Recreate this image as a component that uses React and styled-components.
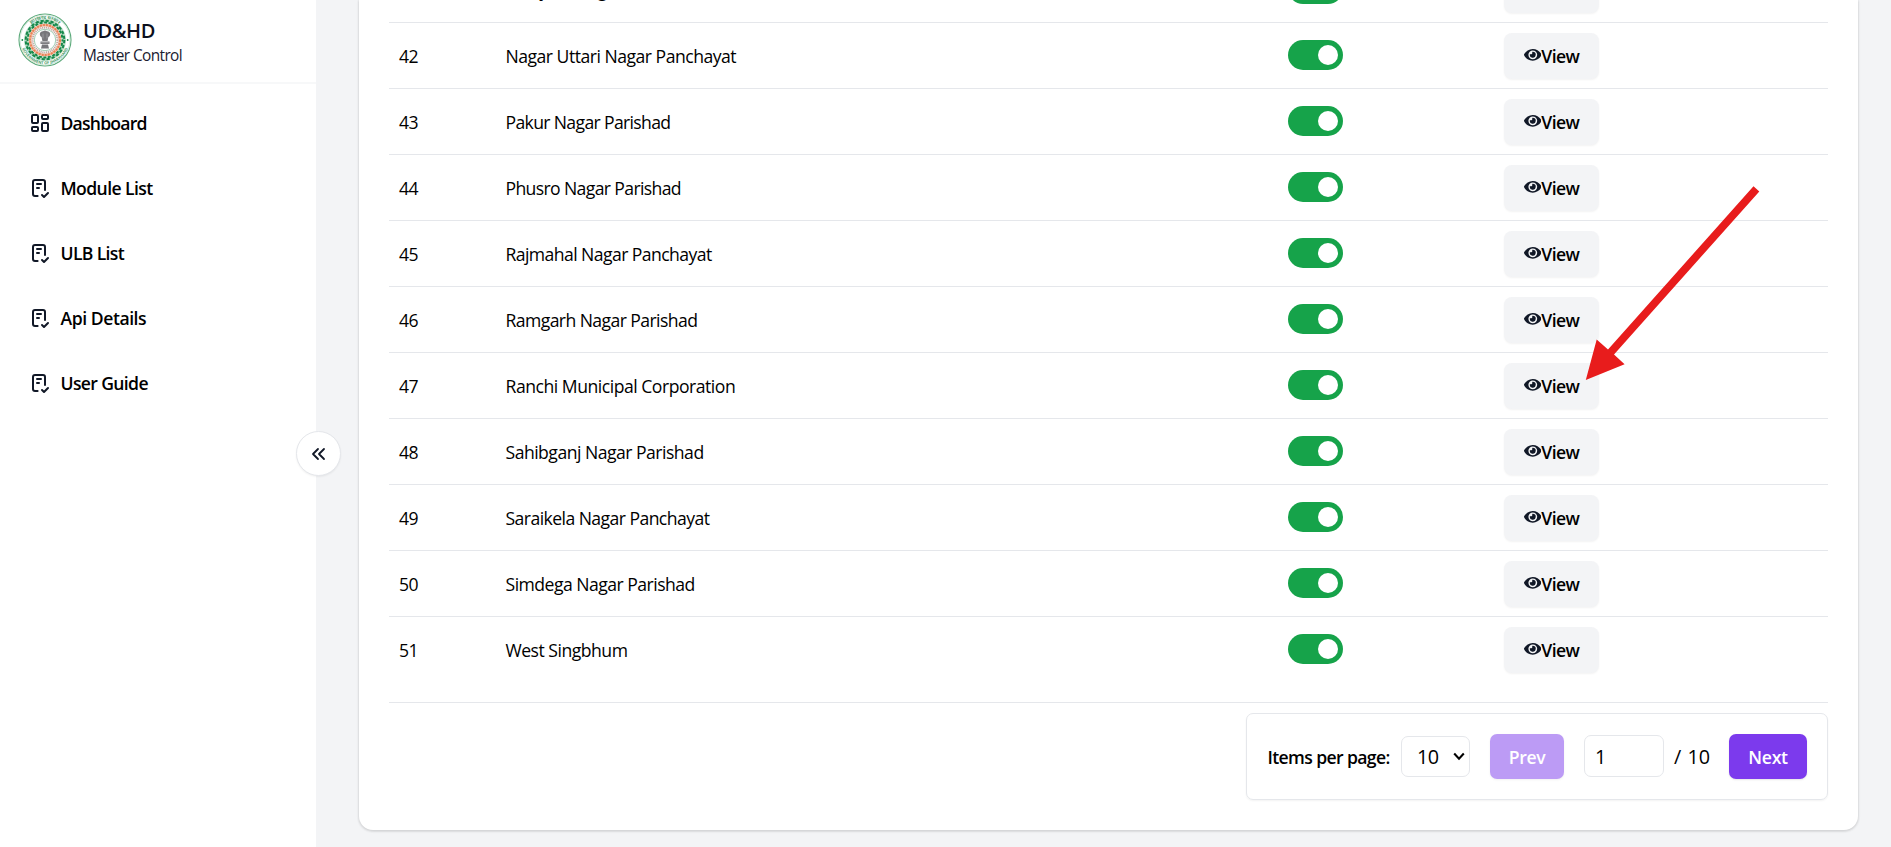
import React from 'react';
import styled, { createGlobalStyle } from 'styled-components';
import { TbChecklist, TbChevronsLeft } from 'react-icons/tb';
import { FaEye } from 'react-icons/fa';

const Global = createGlobalStyle`
  * { box-sizing: border-box; }
  body { margin: 0; overflow: hidden; background: #f3f4f6; color: #000; font-family: "Open Sans", "Noto Sans", sans-serif; }
  button, input, select { font: inherit; color: inherit; }
`;
const Page = styled.div`
  position: relative;
  display: flex;
  height: 847px;
  overflow: hidden;
`;
const Sidebar = styled.aside`
  width: 316px;
  flex: none;
  background: #fff;
`;
const Brand = styled.header`
  height: 84px;
  display: flex;
  align-items: center;
  gap: 11px;
  padding: 0 0 3px 18px;
  border-bottom: 2px solid #f7f8f9;
`;
const BrandText = styled.div`
  display: flex;
  flex-direction: column;
  padding-top: 6px;
`;
const BrandName = styled.span`
  font-size: 20px;
  line-height: 26px;
  font-weight: 600;
  letter-spacing: -0.4px;
  color: #0b0f1c;
`;
const BrandSub = styled.span`
  font-size: 15.4px;
  line-height: 24px;
  letter-spacing: -0.6px;
  color: #1a2030;
`;
const Nav = styled.nav`
  display: flex;
  flex-direction: column;
  gap: 25px;
  padding: 19px 0 0 27.5px;
`;
const NavItem = styled.a`
  display: flex;
  align-items: center;
  gap: 9px;
  height: 40px;
  font-size: 17.6px;
  font-weight: 600;
  letter-spacing: ${(p) => p.$spacing}px;
  svg { width: 24px; height: 24px; color: #111827; margin-top: -1px; }
`;
const Collapse = styled.button`
  position: absolute;
  left: 296px;
  top: 431px;
  width: 45px;
  height: 45px;
  display: flex;
  align-items: center;
  justify-content: center;
  padding: 0;
  border: 1px solid #e5e7eb;
  border-radius: 50%;
  background: #fff;
  box-shadow: 0 1px 2px rgba(0, 0, 0, 0.06);
  svg { width: 24px; height: 24px; color: #111827; stroke-width: 1.8; }
`;
const Main = styled.main`
  flex: 1;
  display: flex;
  padding: 0 33px 17px 43px;
`;
const Card = styled.section`
  flex: 1;
  display: flex;
  flex-direction: column;
  justify-content: flex-end;
  padding: 0 30px 30px;
  background: #fff;
  border-radius: 0 0 14px 14px;
  box-shadow: 0 1px 3px rgba(0, 0, 0, 0.1), 0 1px 2px 1px rgba(0, 0, 0, 0.06);
`;
const Table = styled.div`
  padding-bottom: 19px;
  border-bottom: 1px solid #e5e7eb;
`;
const Row = styled.div`
  display: grid;
  grid-template-columns: 106px 793px 216px 1fr;
  align-items: center;
  height: 66px;
  padding-left: 10px;
  border-bottom: 1px solid #e5e7eb;
  font-size: 17.6px;
  &:last-child { border-bottom-color: transparent; }
`;
const Id = styled.span`
  letter-spacing: -0.6px;
  padding-top: 1px;
`;
const Name = styled.span`
  letter-spacing: ${(p) => p.$spacing}px;
  padding: 1px 0 0 0.5px;
`;
const Toggle = styled.span`
  display: flex;
  justify-content: flex-end;
  width: 55px;
  height: 30px;
  padding: 5px;
  margin: 0 0 1px -10px;
  border-radius: 15px;
  background: #16a34a;
  &::after {
    content: "";
    width: 20px;
    height: 20px;
    border-radius: 50%;
    background: #fff;
  }
`;
const ViewButton = styled.button`
  display: flex;
  align-items: center;
  justify-content: center;
  width: 95px;
  height: 46px;
  margin-left: -10px;
  margin-top: 1px;
  padding: 0;
  border: 0;
  border-radius: 8px;
  background: #f3f4f6;
  box-shadow: 0 1px 2px rgba(0, 0, 0, 0.05);
  font-size: 17.6px;
  font-weight: 600;
  letter-spacing: -0.55px;
  svg { width: 17.6px; height: 17.6px; color: #111827; margin-top: -2px; }
`;
const Footer = styled.footer`
  display: flex;
  justify-content: flex-end;
  padding-top: 10px;
`;
const Pager = styled.div`
  display: flex;
  align-items: center;
  width: 582px;
  height: 87px;
  padding-left: 20.5px;
  border: 1px solid #e5e7eb;
  border-radius: 7px;
  box-shadow: 0 1px 2px rgba(0, 0, 0, 0.05);
`;
const PagerLabel = styled.span`
  width: 133.5px;
  white-space: nowrap;
  font-size: 17.6px;
  font-weight: 600;
  letter-spacing: -0.62px;
  padding-top: 1px;
`;
const SelectBox = styled.div`
  display: grid;
  align-items: center;
  width: 69px;
  margin-right: 20px;
  > * { grid-area: 1 / 1; }
  svg { justify-self: end; margin: 0 5px 0 0; pointer-events: none; }
`;
const PageSize = styled.select`
  appearance: none;
  width: 69px;
  height: 41px;
  padding: 0 0 0 15px;
  border: 1px solid #e5e7eb;
  border-radius: 7px;
  background: #fff;
  font-size: 19.8px;
  letter-spacing: -0.5px;
`;
const PagerButton = styled.button`
  width: ${(p) => p.$width}px;
  height: 45px;
  padding: 0;
  border: 0;
  border-radius: 7px;
  background: #7c3aed;
  color: #fff;
  font-size: 17.6px;
  font-weight: 600;
  letter-spacing: -0.3px;
  box-shadow: 0 1px 2px rgba(0, 0, 0, 0.1);
  opacity: ${(p) => (p.disabled ? 0.5 : 1)};
`;
const PageInput = styled.input`
  width: 80px;
  height: 42px;
  margin: 0 10px 1px 20px;
  padding: 0 10px;
  border: 1px solid #e5e7eb;
  border-radius: 7px;
  font-size: 19.8px;
`;
const PageTotal = styled.span`
  width: 55px;
  white-space: nowrap;
  font-size: 19.8px;
  word-spacing: 1px;
`;
const Arrow = styled.svg`
  position: absolute;
  left: 1580px;
  top: 180px;
  width: 185px;
  height: 205px;
`;

function DashboardIcon() {
  return (
    <svg viewBox="0 0 24 24" fill="none" stroke="currentColor" strokeWidth="2">
      <rect x="4" y="4" width="6" height="8" rx="1" />
      <rect x="4" y="16" width="6" height="4" rx="1" />
      <rect x="14" y="12" width="6" height="8" rx="1" />
      <rect x="14" y="4" width="6" height="4" rx="1" />
    </svg>
  );
}

const nav = [
  ['Dashboard', DashboardIcon, -0.8],
  ['Module List', TbChecklist, -0.6],
  ['ULB List', TbChecklist, -0.65],
  ['Api Details', TbChecklist, -0.45],
  ['User Guide', TbChecklist, -0.65],
];
const rows = [
  [41, 'Mihijam Nagar Parishad', -0.15],
  [42, 'Nagar Uttari Nagar Panchayat', -0.5],
  [43, 'Pakur Nagar Parishad', -0.65],
  [44, 'Phusro Nagar Parishad', -0.63],
  [45, 'Rajmahal Nagar Panchayat', -0.57],
  [46, 'Ramgarh Nagar Parishad', -0.58],
  [47, 'Ranchi Municipal Corporation', -0.48],
  [48, 'Sahibganj Nagar Parishad', -0.51],
  [49, 'Saraikela Nagar Panchayat', -0.56],
  [50, 'Simdega Nagar Parishad', -0.52],
  [51, 'West Singbhum', -0.5],
];

function Emblem() {
  return (
    <svg width="54" height="54" viewBox="0 0 54 54" fill="none">
      <defs>
        <path id="sealTop" d="M6 27a21 21 0 0 1 42 0" />
        <path id="sealBottom" d="M2.8 27a24.2 24.2 0 0 0 48.4 0" />
      </defs>
      <circle cx="27" cy="27" r="26" fill="#fff" stroke="#59a878" strokeWidth="1.1" />
      <circle cx="27" cy="27" r="24.9" stroke="#b9dcc6" strokeWidth=".6" />
      <text fontSize="4.6" fontWeight="700" fill="#4a9c6b" textAnchor="middle">
        <textPath href="#sealTop" startOffset="50%">झारखण्ड सरकार</textPath>
      </text>
      <text fontSize="3.9" fontWeight="700" fill="#4a9c6b" textAnchor="middle">
        <textPath href="#sealBottom" startOffset="50%">GOVERNMENT OF JHARKHAND</textPath>
      </text>
      <circle cx="27" cy="27" r="20.6" stroke="#8fc7a4" strokeWidth=".5" />
      <circle cx="27" cy="27" r="18.4" stroke="#a9d6ba" strokeWidth="3.8" />
      <circle cx="27" cy="27" r="19.3" stroke="#16884a" strokeWidth="2" strokeDasharray="3.2 1.85" />
      <circle cx="27" cy="27" r="17.4" stroke="#16884a" strokeWidth="2" strokeDasharray="2.9 1.66" strokeDashoffset="1.5" />
      <circle cx="27" cy="27" r="14.9" stroke="#f4b79c" strokeWidth="2.8" />
      <circle cx="27" cy="27" r="15" stroke="#ea8256" strokeWidth="2" strokeDasharray="1.9 1.2" />
      <circle cx="27" cy="27" r="12.4" stroke="#c2aaa3" strokeWidth="2" strokeDasharray="1.2 .7" />
      <circle cx="27" cy="27" r="10.7" fill="#fff" stroke="#78b894" strokeWidth=".7" />
      <circle cx="4.3" cy="27" r=".9" fill="#16884a" />
      <circle cx="49.7" cy="27" r=".9" fill="#16884a" />
      <g fill="#77777b">
        <path d="M22 20q1-2 3-1.800q2-1.200 4 0q2-.2 3 1.800q.6 3-1.600 4l-.8 4h-5.200l-.8-4Q21.400 23 22 20z" />
        <path d="M22.500 28.500h9v2.500h-9zM24 31.500h6l1 4h-8z" />
      </g>
      <path d="M25 20.500v5M29 20.500v5M23 29.700h8" stroke="#a9a9ac" strokeWidth=".7" />
    </svg>
  );
}

export default function App() {
  return (
    <>
      <Global />
      <Page>
        <Sidebar>
          <Brand>
            <Emblem />
            <BrandText>
              <BrandName>UD&amp;HD</BrandName>
              <BrandSub>Master Control</BrandSub>
            </BrandText>
          </Brand>
          <Nav>
            {nav.map(([label, Icon, spacing]) => (
              <NavItem key={label} $spacing={spacing}>
                <Icon />
                {label}
              </NavItem>
            ))}
          </Nav>
        </Sidebar>
        <Main>
          <Card>
            <Table>
              {rows.map(([id, name, spacing]) => (
                <Row key={id}>
                  <Id>{id}</Id>
                  <Name $spacing={spacing}>{name}</Name>
                  <Toggle />
                  <ViewButton><FaEye /><span>View</span></ViewButton>
                </Row>
              ))}
            </Table>
            <Footer>
              <Pager>
                <PagerLabel>Items per page:</PagerLabel>
                <SelectBox>
                  <PageSize defaultValue="10"><option>10</option></PageSize>
                  <svg width="12" height="9" viewBox="0 0 12 9" fill="none" stroke="#000" strokeWidth="2.1">
                    <path d="M1.200 1.500L6 6.600l4.800-5.100" />
                  </svg>
                </SelectBox>
                <PagerButton $width={74} disabled>Prev</PagerButton>
                <PageInput defaultValue="1" />
                <PageTotal>/ 10</PageTotal>
                <PagerButton $width={78}>Next</PagerButton>
              </Pager>
            </Footer>
          </Card>
        </Main>
        <Collapse><TbChevronsLeft /></Collapse>
        <Arrow viewBox="1580 180 185 205">
          <path fill="#e81c1c" d="M1753.500 186.200l5.800 5.200-145.300 163.100 10.600 9.700-38.800 15.800 10.900-40.400 11.300 9.900z" />
        </Arrow>
      </Page>
    </>
  );
}
